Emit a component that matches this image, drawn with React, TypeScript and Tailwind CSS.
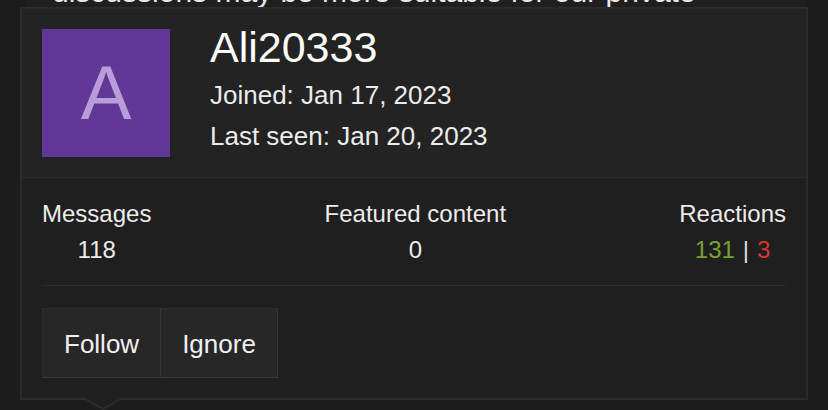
const Stat = ({ label, children }: { label: string; children: React.ReactNode }) => (
  <div className="flex flex-col items-center">
    <div className="text-[24px] leading-[36px] text-[#ececec]">{label}</div>
    <div className="text-[24px] leading-[36px] text-[#ececec]">{children}</div>
  </div>
);

const App = () => {
  return (
    <div
      className="w-[828px] h-[410px] overflow-hidden bg-[#1c1c1c] flex flex-col"
      style={{ fontFamily: '"Liberation Sans", Arial, sans-serif' }}
    >
      {/* page text behind the tooltip */}
      <div className="ml-[26px] w-[780px] h-[7px] overflow-hidden bg-[#1f1f1f] shrink-0">
        <p className="pl-[26px] -mt-[23px] text-[30px] leading-[30px] text-[#e8e8e8] whitespace-nowrap">
          discussions may be more suitable for our private
        </p>
      </div>

      {/* member tooltip */}
      <div className="relative ml-[20px] w-[788px] border-2 border-[#2b2b2b] bg-[#1f1f1f]">
        <div className="flex gap-[40px] px-[20px] pt-[20px] pb-[20px] bg-[#232323] border-b border-[#2a2a2a]">
          <div className="w-[128px] h-[128px] shrink-0 bg-[#613896] flex items-center justify-center">
            <span className="text-[76px] leading-none text-[#b99ddb]">A</span>
          </div>
          <div className="flex flex-col -mt-[3px]">
            <h2 className="text-[43px] leading-[43px] text-white">Ali20333</h2>
            <div className="mt-[6px] text-[26px] leading-[41px] text-[#ececec]">Joined: Jan 17, 2023</div>
            <div className="text-[26px] leading-[41px] text-[#ececec]">Last seen: Jan 20, 2023</div>
          </div>
        </div>

        <div className="px-[20px] pt-[18px] pb-[20px]">
          <div className="flex justify-between">
            <Stat label="Messages">118</Stat>
            <Stat label="Featured content">0</Stat>
            <Stat label="Reactions">
              <span className="text-[#76a22e]">131</span>
              <span className="mx-[8px] text-[#dcdcdc]">|</span>
              <span className="text-[#d8342a]">3</span>
            </Stat>
          </div>
          <div className="mt-[17px] h-px bg-[#2c2c2c]" />
          <div className="mt-[22px] flex">
            <button className="h-[70px] px-[21px] pt-[3px] bg-[#272727] border border-[#2d2d2d] border-r-[#363636] border-b-[#383838] text-[26px] text-[#f0f0f0]">
              Follow
            </button>
            <button className="h-[70px] px-[21px] pt-[3px] bg-[#272727] border border-l-0 border-[#2d2d2d] border-r-[#363636] border-b-[#383838] text-[26px] text-[#f0f0f0]">
              Ignore
            </button>
          </div>
        </div>

        {/* pointer */}
        <svg
          className="absolute left-[60px] top-[calc(100%-2px)]"
          width="42"
          height="14"
          viewBox="0 0 42 14"
        >
          <polygon points="0,0 42,0 21,13" fill="#1f1f1f" />
          <polyline points="0,1 21,13 42,1" fill="none" stroke="#2b2b2b" strokeWidth="2" />
        </svg>
      </div>
    </div>
  );
};

export default App;
